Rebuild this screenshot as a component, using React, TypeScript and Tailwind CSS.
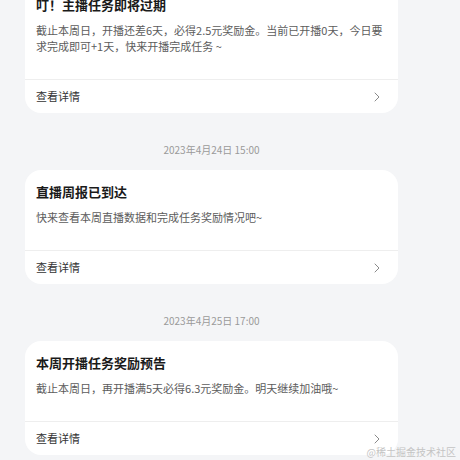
import React from 'react';

interface Notice {
  time?: string;
  title: string;
  desc: string;
}

const NOTICES: Notice[] = [
  {
    title: '叮！主播任务即将过期',
    desc: '截止本周日，开播还差6天，必得2.5元奖励金。当前已开播0天，今日要求完成即可+1天，快来开播完成任务 ~',
  },
  {
    time: '2023年4月24日 15:00',
    title: '直播周报已到达',
    desc: '快来查看本周直播数据和完成任务奖励情况吧~',
  },
  {
    time: '2023年4月25日 17:00',
    title: '本周开播任务奖励预告',
    desc: '截止本周日，再开播满5天必得6.3元奖励金。明天继续加油哦~',
  },
];

const Chevron = () => (
  <svg width="6" height="10" viewBox="0 0 6 10" fill="none" className="text-[#8a8a8a]">
    <path d="M1 1l4 4-4 4" stroke="currentColor" strokeWidth="1" strokeLinecap="round" strokeLinejoin="round" />
  </svg>
);

const NoticeCard: React.FC<{ notice: Notice }> = ({ notice }) => (
  <div className="rounded-[16px] bg-white">
    <div className="pl-[11px] pr-[8px] pt-[14px] pb-[25px]">
      <h3 className="text-[13px] leading-[16px] font-bold text-[#1a1a1a]">{notice.title}</h3>
      <p className="mt-[9px] text-[11px] leading-[16px] text-[#5c5c5c]">{notice.desc}</p>
    </div>
    <div className="flex h-[34px] items-center justify-between border-t border-[#eeeeee] pl-[11px] pr-[18px]">
      <span className="text-[11px] text-[#333]">查看详情</span>
      <Chevron />
    </div>
  </div>
);

export default function App() {
  return (
    <div
      className="relative h-[460px] overflow-hidden bg-[#f4f5f7]"
      style={{ fontFamily: '"Noto Sans CJK SC", "Noto Sans", sans-serif' }}
    >
      <div className="-mt-[17px] flex flex-col px-[25px] pr-[62px]">
        {NOTICES.map((n, i) => (
          <div key={i}>
            {n.time && (
              <div className="mt-[30px] mb-[13px] text-center text-[10px] leading-[14px] text-[#9a9a9a]">{n.time}</div>
            )}
            <NoticeCard notice={n} />
          </div>
        ))}
      </div>
      <div className="absolute bottom-[1px] right-[4px] text-[10px] leading-[14px] text-[#c4c4c4]">@稀土掘金技术社区</div>
    </div>
  );
}
